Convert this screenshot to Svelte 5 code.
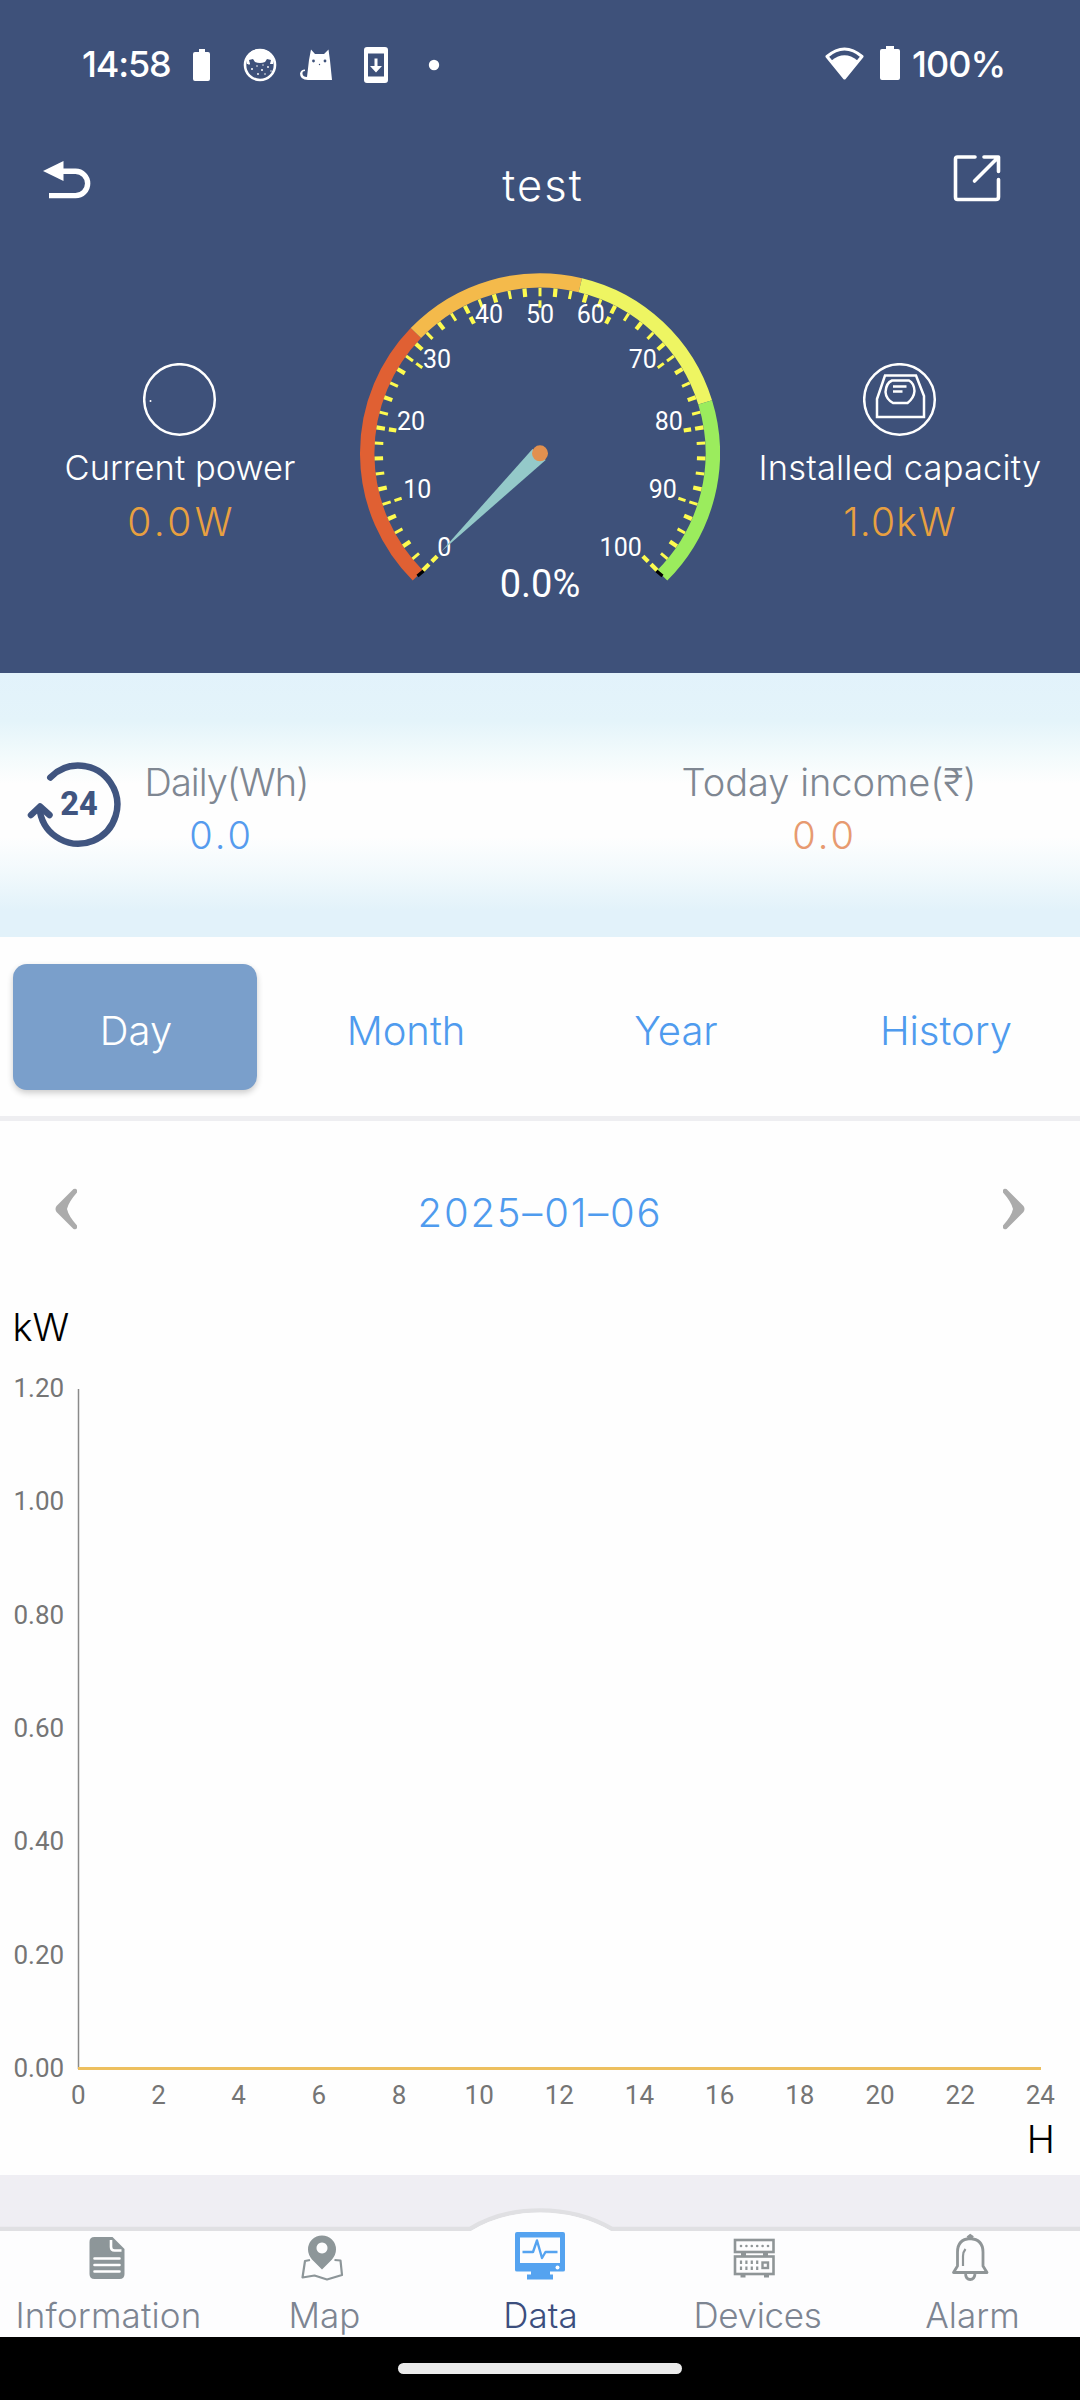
<script>
  const cx = 540;
  const cy = 453.3;

  // Gauge sweep: 270 degrees starting at the lower left.
  function polar(r, pct) {
    const a = ((135 + pct * 2.7) * Math.PI) / 180;
    return [cx + r * Math.cos(a), cy + r * Math.sin(a)];
  }

  function arc(from, to) {
    const r = 172.8;
    const [x1, y1] = polar(r, from);
    const [x2, y2] = polar(r, to);
    return `M${x1} ${y1}A${r} ${r} 0 0 1 ${x2} ${y2}`;
  }

  const zones = [
    { from: 0, to: 33, color: '#e06033' },
    { from: 33, to: 55, color: '#f4ba4b' },
    { from: 55, to: 77, color: '#eef562' },
    { from: 77, to: 100, color: '#9bec5d' }
  ];

  const ticks = [];
  for (let k = 0; k <= 50; k++) {
    const w = k % 2 ? 3 : 4.2;
    const seg = (a, b) => {
      const [x1, y1] = polar(a, k * 2);
      const [x2, y2] = polar(b, k * 2);
      ticks.push({ x1, y1, x2, y2, w });
    };
    seg(165.5, 157);
    if (k % 5 === 0) seg(153, 145.5);
  }

  const scale = [
    [444.3, 546.7], [417.3, 488.7], [411, 421], [437, 358.7], [489, 314], [540, 314],
    [590.7, 314], [642.7, 358.7], [668.7, 421], [662.7, 488.7], [620.7, 546.7]
  ].map(([x, y], i) => ({ x, y: y + 9, v: i * 10 }));

  const tabs = ['Day', 'Month', 'Year', 'History'];
  const yLabels = ['1.20', '1.00', '0.80', '0.60', '0.40', '0.20', '0.00'];
  const xLabels = Array.from({ length: 13 }, (_, i) => i * 2);
  const dots = [0, 1, 2, 3, 4, 5];
</script>

<div class="screen">
  <header>
    <div class="status">
      <span class="time">14:58</span>
      <svg class="notif" width="260" height="40" viewBox="190 45 260 40" fill="#fff">
        <path d="M199 49h6v3h3q2 0 2 2v25q0 2-2 2h-13q-2 0-2-2V54q0-2 2-2h4z" />
        <circle cx="260" cy="65" r="15" fill="none" stroke="#fff" stroke-width="2.6" />
        <path d="M246 59q3-10 14-10t14 10l-1 5h-3l1-4-4-1-2 3q-5 2-10 0l-2-3-4 1 1 4h-3z" />
        <g>
          <circle cx="252" cy="69" r="1" /><circle cx="257" cy="66" r=".8" />
          <circle cx="262" cy="70" r="1" /><circle cx="268" cy="67" r=".9" />
          <circle cx="258" cy="74" r=".9" /><circle cx="265" cy="74" r=".8" />
          <circle cx="271" cy="71" r=".7" /><circle cx="249" cy="64" r=".8" />
          <circle cx="263" cy="65" r=".7" />
        </g>
        <path d="M311 49.500l4 4.500h9l4.500-4.500 1.500 11 2 19.500h-24q-8 0-8-6.500 1-4 5-4v1.500q-3 0-2.500 3t4.500 3l2-17z" />
        <circle cx="313.500" cy="61" r="1.400" fill="#3e517a" />
        <circle cx="325" cy="61" r="1.400" fill="#3e517a" />
        <circle cx="319.500" cy="64.500" r=".7" fill="#3e517a" />
        <path fill-rule="evenodd" d="M367 47h18q3 0 3 3v30q0 3-3 3h-18q-3 0-3-3V50q0-3 3-3zm1 6.500v23h16v-23z" />
        <path d="M374.500 58.500h3v7.500h4.500l-6 6.500-6-6.500h4.500z" />
        <circle cx="434" cy="65" r="5.200" />
      </svg>
      <svg class="signal" width="84" height="40" viewBox="821 45 84 40" fill="#fff">
        <path d="M827 56.500Q844.500 41.500 862 56.500L844.500 78z" fill="none" stroke="#fff" stroke-width="3" stroke-linejoin="round" />
        <path d="M831.500 60.500Q844.500 50 857.500 60.500L844.500 77z" />
        <path d="M886 46h8v3h4q2 0 2 2v27q0 2-2 2h-16q-2 0-2-2V51q0-2 2-2h4z" />
      </svg>
      <span class="pct">100%</span>
    </div>

    <div class="bar">
      <svg width="50" height="40" viewBox="42 160 50 40">
        <path d="M43 171L63.500 161v20z" fill="#fff" />
        <path d="M60 171.300H75.500a12 12 0 0 1 0 24.300H49" fill="none" stroke="#fff" stroke-width="5.400" />
      </svg>
      <h1>test</h1>
      <svg width="50" height="50" viewBox="952 153 50 50" fill="none" stroke="#fff" stroke-width="3.600" stroke-linecap="round">
        <path d="M975 157H957.500q-2 0-2 2v38q0 2.500 2 2.500H996q2.500 0 2.500-2.500V179.500" />
        <path d="M984 157H998.500V171.500M998 157.500L974.500 181" stroke-linejoin="round" />
      </svg>
    </div>

    <div class="hero">
      <div class="stat">
        <svg width="74" height="74" viewBox="0 0 74 74">
          <circle cx="36.500" cy="36.500" r="35.300" fill="none" stroke="#fff" stroke-width="2.500" />
          <circle cx="7.500" cy="38" r="1" fill="#fff" />
        </svg>
        <span class="name power">Current power</span>
        <span class="value watts">0.0W</span>
      </div>

      <svg class="gauge" width="360" height="430" viewBox="360 243 360 430">
        {#each zones as z}
          <path d={arc(z.from, z.to)} fill="none" stroke={z.color} stroke-width="14.400" />
        {/each}
        <path d="M417.500 576L424 570.500M662.500 576L656 570.500" stroke="#000" stroke-width="3.200" />
        {#each ticks as t}
          <line x1={t.x1} y1={t.y1} x2={t.x2} y2={t.y2} stroke="#fdfb4f" stroke-width={t.w} />
        {/each}
        {#each scale as s}
          <text x={s.x} y={s.y} text-anchor="middle" font-size="25">{s.v}</text>
        {/each}
        <path d="M441 551.700L532.500 449L545.700 460z" fill="#94c9c9" />
        <circle {cx} {cy} r="8" fill="#e2904f" />
        <text x="540" y="596.500" text-anchor="middle" font-size="38">0.0%</text>
      </svg>

      <div class="stat">
        <svg width="74" height="74" viewBox="0 0 74 74" fill="none" stroke="#fff" stroke-width="2.500">
          <circle cx="36.500" cy="36.500" r="35.300" />
          <path d="M22 12.500H53L61 33V54H14V36z" />
          <path d="M29 17.500H46Q51 20 51.500 28Q51 35 44.500 40H30Q23 36 22.500 29Q23 20 29 17.500z" />
          <path d="M30 23.500H43.500M30 28.500H39.500" />
        </svg>
        <span class="name capacity">Installed capacity</span>
        <span class="value">1.0kW</span>
      </div>
    </div>
  </header>

  <section class="summary">
    <svg width="94" height="94" viewBox="27 758 94 94">
      <path d="M50.300 777.500A39 39 0 1 1 40 812" fill="none" stroke="#405580" stroke-width="6.500" stroke-linecap="round" />
      <path d="M31 815L40 806.500L49.500 815" fill="none" stroke="#405580" stroke-width="6.500" stroke-linecap="round" stroke-linejoin="round" />
      <text x="79" y="814.500" text-anchor="middle">24</text>
    </svg>
    <div class="metric daily">
      <span class="label">Daily(Wh)</span>
      <span class="num blue">0.0</span>
    </div>
    <div class="metric income">
      <span class="label">Today income(₹)</span>
      <span class="num orange">0.0</span>
    </div>
  </section>

  <nav class="tabs">
    {#each tabs as tab, i}
      <div class="tab" class:active={i === 0}><span>{tab}</span></div>
    {/each}
  </nav>

  <div class="date">
    <svg width="22" height="42" viewBox="0 0 22 42"><path d="M18.500 1q2.500-1 3.500 1v2.500Q13.500 14 12 21q1.500 7 10 16.500v2.500q-1 2-3.500 1L1.500 24q-2-3 0-6z" fill="#ababab" /></svg>
    <span>2025–01–06</span>
    <svg width="22" height="42" viewBox="0 0 22 42"><path d="M3.500 1Q1 0 0 2v2.500Q8.500 14 10 21 8.500 28 0 37.500v2.500q1 2 3.500 1L20.500 24q2-3 0-6z" fill="#ababab" /></svg>
  </div>

  <section class="chart">
    <div class="unit">kW</div>
    <svg width="1080" height="750" viewBox="0 1365 1080 750">
      {#each yLabels as l, i}
        <text x="64.200" y={1397 + i * 113.33} text-anchor="end">{l}</text>
      {/each}
      <path d="M78.500 1389V2069" stroke="#8a8a8a" stroke-width="1.500" />
      <path d="M78 2068.500H1041" stroke="#edbf5e" stroke-width="3" />
      {#each xLabels as l, i}
        <text x={78.300 + i * 80.170} y="2104.300" text-anchor="middle">{l}</text>
      {/each}
    </svg>
    <div class="unit end">H</div>
  </section>

  <footer>
    <svg class="edge" width="1080" height="60" viewBox="0 2175 1080 60">
      <path d="M0 2229H470Q500 2210.500 540 2210.500T612 2229H1080V2236H0z" fill="#fdfdfe" stroke="#e0e0e3" stroke-width="4.500" />
      <path d="M0 2231H471Q501 2212.500 540 2212.500T611 2231H1080V2240H0z" fill="#fdfdfe" />
    </svg>
    <div class="items">
      <div class="item info">
        <svg width="50" height="50" viewBox="82.500 2231 50 50">
          <path d="M94 2237H112L124 2249V2274q0 5-5 5H94q-5 0-5-5V2242q0-5 5-5z" fill="#8d9699" />
          <path d="M110.500 2240V2247q0 3.500 3.500 3.500H121" fill="none" stroke="#fff" stroke-width="2.600" />
          <path d="M94 2258.500H119M94 2265H119M94 2271.500H119" stroke="#fff" stroke-width="2.600" stroke-linecap="round" />
        </svg>
        <span>Information</span>
      </div>
      <div class="item map">
        <svg width="50" height="50" viewBox="299 2231 50 50">
          <path fill-rule="evenodd" d="M322 2235.500a14 14 0 0 1 14 14q0 5-4 10l-10 10-10-10q-4-5-4-10a14 14 0 0 1 14-14zm0 7a5.500 5.500 0 1 0 .01 0z" fill="#8d9699" />
          <path d="M310 2260l-5 1-2.500 16.500 12-2 12.500 4 15-4.500-1.500-14.500-6-.5" fill="none" stroke="#8d9699" stroke-width="2.200" stroke-linejoin="round" />
        </svg>
        <span>Map</span>
      </div>
      <div class="item data">
        <svg width="50" height="50" viewBox="515 2231 50 50">
          <path fill-rule="evenodd" d="M517 2232H563q2 0 2 2V2270q0 1.500-2 1.500H550v3h3v5H527v-5h4v-3H517q-2 0-2-1.500V2234q0-2 2-2zm3 5.500V2263H560V2237.500z" fill="#55a3f0" />
          <path d="M522.500 2252H533L537 2240.500L542 2258L545.500 2252H557.500" fill="none" stroke="#55a3f0" stroke-width="2.400" stroke-linejoin="round" />
          <circle cx="557.500" cy="2267.500" r="2" fill="#fff" />
        </svg>
        <span>Data</span>
      </div>
      <div class="item devices">
        <svg width="50" height="50" viewBox="731 2231 50 50" fill="none" stroke="#8f9597">
          <rect x="735" y="2240" width="38.500" height="12" stroke-width="2.600" />
          <rect x="735" y="2256.500" width="38.500" height="17.500" stroke-width="2.600" />
          <path d="M741 2254.300H746M763 2254.300H768M740.500 2275.800H745.500M764 2275.800H769" stroke-width="3.400" />
          {#each dots as d}
            <circle cx={741 + d * 5.400} cy="2246" r="1.300" fill="#8f9597" stroke="none" />
          {/each}
          {#each [0, 1, 2, 3] as d}
            <path d="M{741 + d * 5.400} 2260.500v3.500m0 2.500v3.500" stroke-width="2.200" />
          {/each}
          <rect x="762.500" y="2262.500" width="5.500" height="5.500" stroke-width="2.400" />
        </svg>
        <span>Devices</span>
      </div>
      <div class="item alarm">
        <svg width="50" height="50" viewBox="947 2232 50 50" fill="none" stroke="#8f9597" stroke-width="2.800">
          <path d="M957.500 2267V2253q0-12.500 12.500-13.500 13 1 13 13.500V2267l4 6.500H953.500z" stroke-linejoin="round" />
          <path d="M965.500 2250q-2.500 3-2.500 7V2267" stroke-width="2.200" />
          <path d="M967.500 2238.500L970.200 2236.500L973 2238.500" />
          <path d="M965.500 2275q.5 5.500 4.700 5.500t4.800-5.500" />
        </svg>
        <span>Alarm</span>
      </div>
    </div>
  </footer>

  <div class="home"><div class="pill"></div></div>
</div>

<style>
  :global(body) { margin: 0; background: #fdfdfe; }
  .screen {
    width: 1080px;
    height: 2400px;
    display: flex;
    flex-direction: column;
    overflow: hidden;
    background: #fefefe;
    font-family: Inter, "Liberation Sans", sans-serif;
    font-weight: 300;
    white-space: nowrap;
  }
  svg { display: block; flex: none; }
  header { height: 673px; background: #3e517a; color: #fff; }

  .status { height: 130px; display: flex; align-items: center; padding: 0 77px 0 82px; font-size: 36px; font-weight: 500; }
  .time { width: 108px; letter-spacing: -1.2px; margin-top: -2px; }
  .signal { margin-left: auto; }
  .pct { width: 98px; padding-left: 7px; box-sizing: border-box; margin-top: -3px; letter-spacing: -1px; }

  .bar { height: 113px; display: flex; align-items: center; justify-content: space-between; padding: 0 78px 0 42px; }
  .bar svg:first-child { margin-top: -13px; }
  .bar svg:last-child { margin-top: -17px; }
  h1 { margin: -4px 0 0; font-size: 43.5px; font-weight: 300; letter-spacing: 2px; padding-left: 42px; }

  .hero { display: grid; grid-template-columns: 360px 360px 360px; height: 430px; }
  .stat { display: flex; flex-direction: column; align-items: center; padding-top: 120px; }
  .name { margin-top: 6px; font-size: 34.5px; line-height: 49px; }
  .capacity { letter-spacing: 0.2px; }
  .value { font-size: 39px; line-height: 59px; color: #e8a040; letter-spacing: 1.2px; }
  .watts { letter-spacing: 3.4px; padding-left: 3px; }
  .gauge text { fill: #fff; font-family: Roboto, sans-serif; font-weight: 400; }

  .summary {
    height: 264px;
    display: flex;
    align-items: flex-start;
    padding-left: 27px;
    background: linear-gradient(#e2f2fb 0, #e4f4fa 18%, #f3fbfc 32%, #fefefe 42%, #fefefe 62%, #f1f9fc 76%, #e2f2fa 90%, #e2f2fa 100%);
  }
  .summary svg { margin-top: 85px; }
  .summary text { font-family: Roboto, sans-serif; font-size: 32.5px; font-weight: 800; fill: #405580; }
  .metric { display: flex; flex-direction: column; align-items: center; padding-top: 83px; font-size: 38px; }
  .label, .num { line-height: 53px; }
  .num { letter-spacing: 3px; padding-left: 3px; }
  .daily { width: 198px; }
  .daily .label { letter-spacing: -1px; padding-left: 13px; }
  .income { width: 300px; margin-left: 354px; }
  .income .label { padding-left: 12px; }
  .label { color: #7f8792; }
  .blue { color: #559bee; }
  .orange { color: #e79a70; }

  .tabs { height: 179px; display: grid; grid-template-columns: repeat(4, 270px); border-bottom: 5px solid #eeeef1; }
  .tab {
    margin: 27px 13px 26px;
    display: flex;
    align-items: center;
    justify-content: center;
    border-radius: 14px;
    font-size: 40px;
    color: #4f9bee;
    padding: 7px 0 0 2px;
  }
  .active { background: #7a9fcb; color: #fff; box-shadow: 0 3px 6px rgba(0, 0, 0, 0.2); }

  .date { height: 178px; display: flex; align-items: center; justify-content: space-between; padding: 0 55px; color: #4f9bee; font-size: 40px; }
  .date svg { margin-top: -3px; }
  .date span { padding-top: 5px; letter-spacing: 1.8px; }

  .chart { height: 876px; }
  .unit { height: 56px; line-height: 56px; font-size: 38px; color: #000; padding: 0 12.5px; }
  .chart svg { margin-top: 10px; }
  .chart text { font-family: Roboto, sans-serif; font-size: 26px; font-weight: 400; fill: #757575; }
  .end { text-align: right; padding-right: 25px; margin-top: -4px; }

  footer { height: 162px; background: #fdfdfe; }
  .edge { background: #efeef3; }
  .items { display: grid; grid-template-columns: repeat(5, 216px); }
  .item { display: flex; flex-direction: column; align-items: center; margin-top: -4px; font-size: 35px; color: #7d8592; }
  .item span { line-height: 70px; margin-top: -1px; padding-left: 1px; }
  .item.info span { letter-spacing: 0.15px; }
  .item.devices span { letter-spacing: -0.3px; padding-left: 3px; }
  .item.data { color: #3c4e7d; }

  .home { height: 63px; background: #000; display: flex; justify-content: center; }
  .pill { width: 284px; height: 11px; margin-top: 26px; border-radius: 6px; background: #ebebeb; }
</style>
